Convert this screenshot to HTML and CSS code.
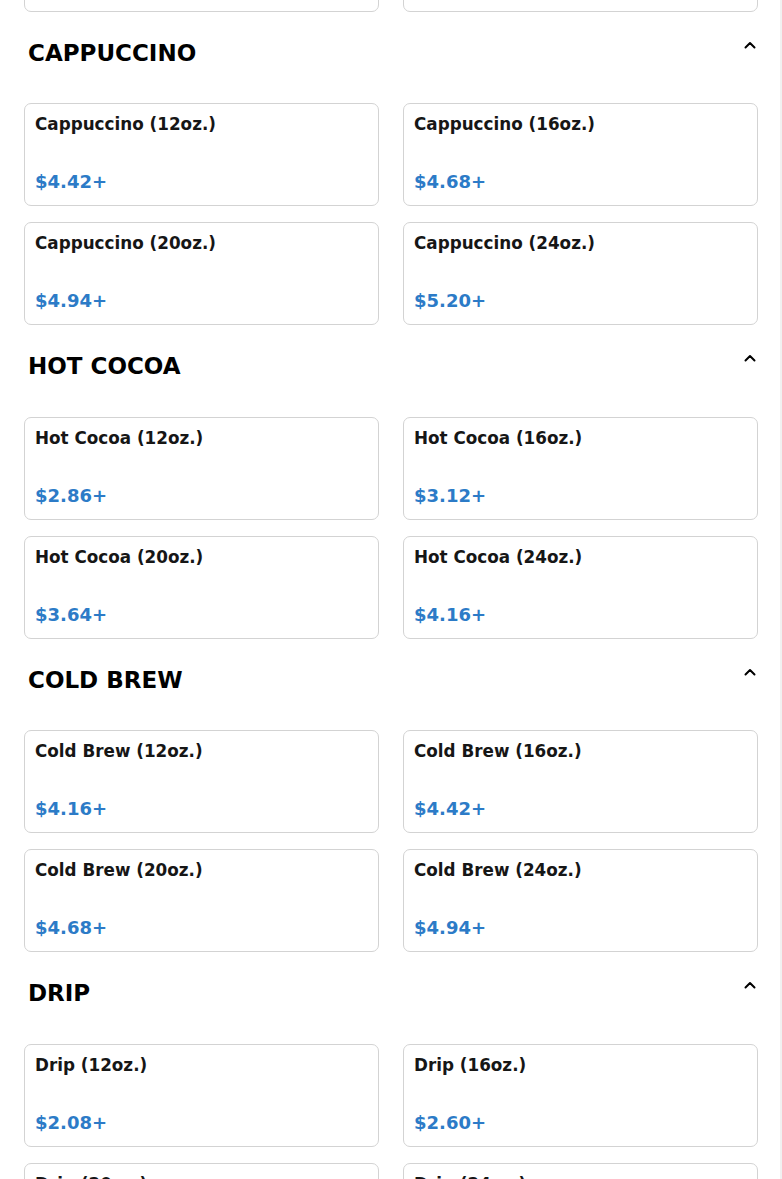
FILE: index.html
```html
<!DOCTYPE html>
<html lang="en">
<head>
<meta charset="utf-8">
<title>Menu</title>
<link rel="stylesheet" href="styles.css">
</head>
<body>
<main class="menu">
  <div class="grid prev">
    <div class="card"><div class="title">Latte (24oz.)</div><div class="price">$4.94+</div></div>
    <div class="card"><div class="title">Latte (24oz.)</div><div class="price">$5.20+</div></div>
  </div>

  <section class="section">
    <div class="section-head"><h2>CAPPUCCINO</h2><svg class="chev" viewBox="0 0 16 16"><path d="M3.5 10.5 L8 6 L12.5 10.5"/></svg></div>
    <div class="grid">
      <div class="card"><div class="title">Cappuccino (12oz.)</div><div class="price">$4.42+</div></div>
      <div class="card"><div class="title">Cappuccino (16oz.)</div><div class="price">$4.68+</div></div>
      <div class="card"><div class="title">Cappuccino (20oz.)</div><div class="price">$4.94+</div></div>
      <div class="card"><div class="title">Cappuccino (24oz.)</div><div class="price">$5.20+</div></div>
    </div>
  </section>

  <section class="section">
    <div class="section-head"><h2>HOT COCOA</h2><svg class="chev" viewBox="0 0 16 16"><path d="M3.5 10.5 L8 6 L12.5 10.5"/></svg></div>
    <div class="grid">
      <div class="card"><div class="title">Hot Cocoa (12oz.)</div><div class="price">$2.86+</div></div>
      <div class="card"><div class="title">Hot Cocoa (16oz.)</div><div class="price">$3.12+</div></div>
      <div class="card"><div class="title">Hot Cocoa (20oz.)</div><div class="price">$3.64+</div></div>
      <div class="card"><div class="title">Hot Cocoa (24oz.)</div><div class="price">$4.16+</div></div>
    </div>
  </section>

  <section class="section">
    <div class="section-head"><h2>COLD BREW</h2><svg class="chev" viewBox="0 0 16 16"><path d="M3.5 10.5 L8 6 L12.5 10.5"/></svg></div>
    <div class="grid">
      <div class="card"><div class="title">Cold Brew (12oz.)</div><div class="price">$4.16+</div></div>
      <div class="card"><div class="title">Cold Brew (16oz.)</div><div class="price">$4.42+</div></div>
      <div class="card"><div class="title">Cold Brew (20oz.)</div><div class="price">$4.68+</div></div>
      <div class="card"><div class="title">Cold Brew (24oz.)</div><div class="price">$4.94+</div></div>
    </div>
  </section>

  <section class="section">
    <div class="section-head"><h2>DRIP</h2><svg class="chev" viewBox="0 0 16 16"><path d="M3.5 10.5 L8 6 L12.5 10.5"/></svg></div>
    <div class="grid">
      <div class="card"><div class="title">Drip (12oz.)</div><div class="price">$2.08+</div></div>
      <div class="card"><div class="title">Drip (16oz.)</div><div class="price">$2.60+</div></div>
      <div class="card"><div class="title">Drip (20oz.)</div><div class="price">$3.12+</div></div>
      <div class="card"><div class="title">Drip (24oz.)</div><div class="price">$3.64+</div></div>
    </div>
  </section>
</main>
</body>
</html>
```

FILE: styles.css
```css
html {
  background: #ffffff;
  box-shadow: inset -2px 0 0 #f1f1f1;
  min-height: 100%;
}
body {
  margin: 0;
  font-family: "DejaVu Sans", "Liberation Sans", sans-serif;
  color: #1a1a1a;
  overflow: hidden;
}
.menu {
  padding: 0 24px;
}
.prev {
  margin-top: -91.5px;
}
.grid {
  display: grid;
  grid-template-columns: 1fr 1fr;
  column-gap: 24px;
  row-gap: 16px;
}
.card {
  border: 1px solid #d3d3d3;
  border-radius: 7px;
  padding: 10px 10px 12px;
  background: #fff;
}
.title {
  font-size: 16.8px;
  line-height: 20px;
  font-weight: bold;
  color: #161616;
}
.price {
  margin-top: 37px;
  font-size: 18px;
  line-height: 22px;
  font-weight: bold;
  color: #2c7bc7;
}
.section-head {
  display: flex;
  justify-content: space-between;
  align-items: flex-start;
  padding: 27px 0 36.5px 4px;
}
.section-head h2 {
  margin: 0;
  font-size: 23px;
  line-height: 28px;
  font-weight: bold;
  color: #000;
}
.chev {
  width: 16px;
  height: 16px;
  margin-top: -2px;
  fill: none;
  stroke: #000;
  stroke-width: 2;
  stroke-linecap: round;
  stroke-linejoin: round;
}
```
